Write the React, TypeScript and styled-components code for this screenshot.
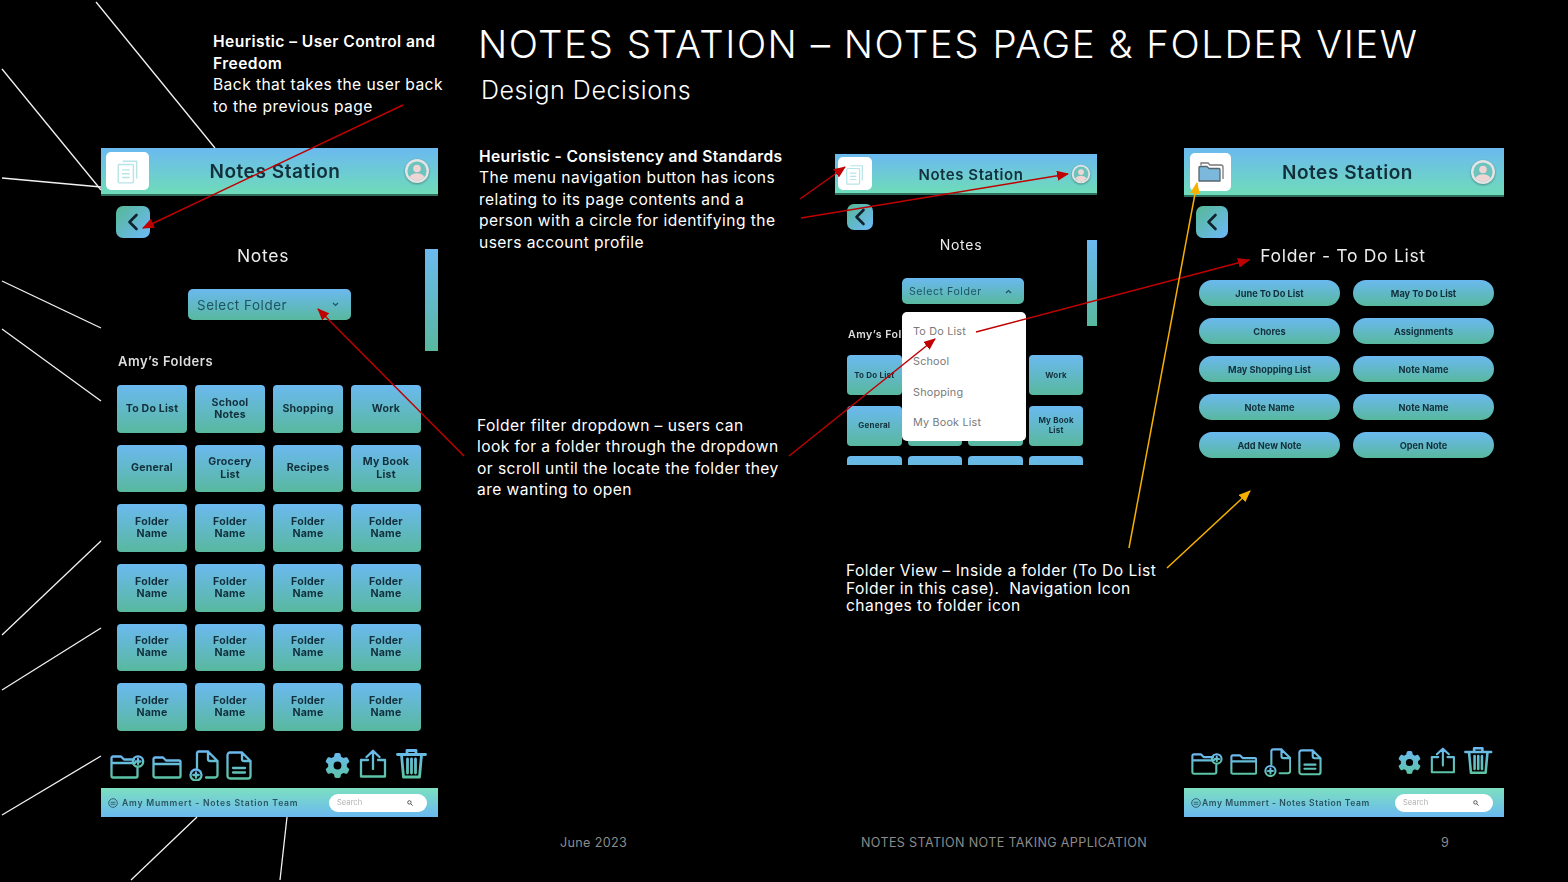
import React from "react";
import styled, { createGlobalStyle, ThemeProvider } from "styled-components";
import { FaGear } from "react-icons/fa6";

interface PhoneDims {
  width: number;
  height: number;
  headerH: number;
  titleSize: number;
  titleNudge: number;
  tileLeft: number;
  tileW: number;
  tileH: number;
  avatar: number;
  avatarRight: number;
  backTop: number;
  backLeft: number;
  backW: number;
  backH: number;
  headingTop: number;
  headingSize: number;
  headingPad: number;
  creditSpacing: number;
  creditGap: number;
}

declare module "styled-components" {
  export interface DefaultTheme extends PhoneDims {}
}

const bigPhone: PhoneDims = {
  width: 337, height: 669, headerH: 48, titleSize: 19, titleNudge: 3, tileLeft: 5, tileW: 43, tileH: 38,
  avatar: 26, avatarRight: 8, backTop: 10, backLeft: 15, backW: 34, backH: 32,
  headingTop: 8, headingSize: 17.5, headingPad: 13, creditSpacing: 0.8, creditGap: 4,
};
const folderPhone: PhoneDims = {
  ...bigPhone, width: 320, headerH: 49, titleNudge: 6, tileLeft: 6, tileW: 41, backTop: 9, backLeft: 12, backW: 32,
  headingPad: 2, creditSpacing: 0.53, creditGap: 1,
};
const menuPhone: PhoneDims = {
  width: 262, height: 311, headerH: 41, titleSize: 15, titleNudge: 1, tileLeft: 3, tileW: 34, tileH: 33,
  avatar: 20, avatarRight: 6, backTop: 9, backLeft: 12, backW: 26, backH: 26,
  headingTop: 7, headingSize: 14, headingPad: 10, creditSpacing: 0.5, creditGap: 2,
};

const blue = "#6bb9f0";
const green = "#58b89e";
const ink = "#12303c";
const phoneFont = `Inter, "Noto Sans", sans-serif`;
const slideFont = `Inter, "Noto Sans", sans-serif`;

const Global = createGlobalStyle`
  html, body { margin: 0; background: #000; }
  body { width: 1568px; height: 882px; overflow: hidden; }
`;

const Slide = styled.div`
  position: relative;
  width: 1568px;
  height: 882px;
  background: #000;
  color: #fff;
  font-family: ${slideFont};
  display: flex;
  flex-direction: column;
`;

const Main = styled.div`
  display: flex;
  padding-left: 101px;
`;

const LeftColumn = styled.div`
  width: 337px;
  margin-right: 39px;
  display: flex;
  flex-direction: column;
`;

const TopNote = styled.p`
  margin: 0;
  height: 148px;
  box-sizing: border-box;
  padding: 31px 0 0 112px;
  font-size: 15.6px;
  line-height: 21.5px;
  white-space: nowrap;
  letter-spacing: 0.42px;
`;

const Strong = styled.b`
  font-weight: 600;
`;

const BodyStrong = styled(Strong)`
  letter-spacing: 0.36px;
`;

const RightArea = styled.div`
  flex: 1;
  display: flex;
  flex-direction: column;
`;

const Heading = styled.h1`
  margin: 19px 0 0 1px;
  font-size: 38.5px;
  line-height: 50px;
  font-weight: 300;
  letter-spacing: 1.5px;
  white-space: nowrap;
`;

const SubHeading = styled.h2`
  margin: 2px 0 0 4px;
  font-size: 25px;
  line-height: 38px;
  font-weight: 300;
  letter-spacing: 0.55px;
`;

const Row = styled.div`
  display: flex;
  margin-top: 36px;
`;

const TextColumn = styled.div`
  width: 358px;
  display: flex;
  flex-direction: column;
`;

const Body = styled.p<{ $left?: number; $top?: number }>`
  margin: ${(p) => p.$top ?? 1}px 0 0 ${(p) => p.$left ?? 2}px;
  font-size: 15.6px;
  line-height: 21.4px;
  white-space: nowrap;
  letter-spacing: 0.44px;
`;

const MiddleColumn = styled.div`
  width: 349px;
  padding-top: 9px;
  display: flex;
  flex-direction: column;
`;

const Caption = styled.p`
  margin: 97px 0 0 11px;
  font-size: 15.6px;
  line-height: 17.5px;
  white-space: nowrap;
  letter-spacing: 0.46px;
`;

const RightColumn = styled.div`
  padding-top: 3px;
`;

const Footer = styled.div`
  margin-top: 18px;
  display: flex;
  font-size: 12.6px;
  color: #8b8b8b;
  line-height: 16px;
`;

const FooterItem = styled.span<{ $width: number; $left?: number }>`
  width: ${(p) => p.$width}px;
  margin-left: ${(p) => p.$left ?? 0}px;
  white-space: nowrap;
  letter-spacing: 0.34px;
`;

/* phone mockup */
const Phone = styled.div`
  position: relative;
  width: ${(p) => p.theme.width}px;
  height: ${(p) => p.theme.height}px;
  overflow: hidden;
  display: flex;
  flex-direction: column;
  font-family: ${phoneFont};
  filter: blur(0.35px);
`;

const PhoneHeader = styled.div`
  flex: none;
  height: ${(p) => p.theme.headerH}px;
  padding: 0 ${(p) => p.theme.avatarRight}px 0 ${(p) => p.theme.tileLeft}px;
  box-sizing: border-box;
  display: flex;
  align-items: center;
  background: linear-gradient(180deg, ${blue} 0%, #6fdcb9 100%);
  border-bottom: 2px solid #2f6d5c;
`;

const IconTile = styled.div`
  width: ${(p) => p.theme.tileW}px;
  height: ${(p) => p.theme.tileH}px;
  background: #fff;
  border-radius: 5px;
  display: flex;
  align-items: center;
  justify-content: center;
  flex: none;
`;

const AppTitle = styled.div`
  flex: 1;
  padding: 1px ${(p) => p.theme.titleNudge}px 0 0;
  text-align: center;
  font-size: ${(p) => p.theme.titleSize}px;
  font-weight: 600;
  color: ${ink};
  letter-spacing: 0.55px;
`;

const Avatar = styled.svg`
  width: ${(p) => p.theme.avatar}px;
  height: ${(p) => p.theme.avatar}px;
  flex: none;
  filter: drop-shadow(0 1px 1px rgba(0, 0, 0, 0.35));
`;

const BackButton = styled.div`
  flex: none;
  width: ${(p) => p.theme.backW}px;
  height: ${(p) => p.theme.backH}px;
  margin: ${(p) => p.theme.backTop}px 0 0 ${(p) => p.theme.backLeft}px;
  border-radius: 7px;
  background: linear-gradient(135deg, ${green} 10%, ${blue} 90%);
  display: flex;
  align-items: center;
  justify-content: center;
`;

const ScreenTitle = styled.div`
  flex: none;
  margin-top: ${(p) => p.theme.headingTop}px;
  padding-right: ${(p) => p.theme.headingPad}px;
  text-align: center;
  font-size: ${(p) => p.theme.headingSize}px;
  line-height: 1.15;
  font-weight: 400;
  color: #ececec;
  letter-spacing: 0.7px;
`;

const Select = styled.div<{ $top: number; $left: number; $width: number; $height: number; $size: number }>`
  flex: none;
  box-sizing: border-box;
  margin: ${(p) => p.$top}px 0 0 ${(p) => p.$left}px;
  width: ${(p) => p.$width}px;
  height: ${(p) => p.$height}px;
  padding: 0 12px 0 ${(p) => (p.$size > 12 ? 9 : 7)}px;
  display: flex;
  align-items: center;
  justify-content: space-between;
  border-radius: 5px;
  background: linear-gradient(180deg, ${blue} 0%, ${green} 100%);
  color: #1c5561;
  font-size: ${(p) => p.$size}px;
  letter-spacing: 0.55px;
`;

const FolderLabel = styled.div<{ $top: number; $left: number; $size: number; $clip?: number }>`
  flex: none;
  margin: ${(p) => p.$top}px 0 0 ${(p) => p.$left}px;
  max-width: ${(p) => (p.$clip ? `${p.$clip}px` : "none")};
  overflow: hidden;
  font-size: ${(p) => p.$size}px;
  line-height: 18px;
  font-weight: 600;
  color: #dedede;
  white-space: nowrap;
  letter-spacing: 0.5px;
`;

const Scrollbar = styled.div<{ $top: number; $left: number; $width: number; $height: number }>`
  position: absolute;
  top: ${(p) => p.$top}px;
  left: ${(p) => p.$left}px;
  width: ${(p) => p.$width}px;
  height: ${(p) => p.$height}px;
  background: linear-gradient(180deg, ${blue} 0%, ${green} 100%);
`;

const FolderGrid = styled.div<{ $top: number; $left: number; $col: number; $row: number; $colGap: number; $rowGap: number }>`
  flex: none;
  margin: ${(p) => p.$top}px 0 0 ${(p) => p.$left}px;
  display: grid;
  grid-template-columns: repeat(4, ${(p) => p.$col}px);
  grid-auto-rows: ${(p) => p.$row}px;
  column-gap: ${(p) => p.$colGap}px;
  row-gap: ${(p) => p.$rowGap}px;
`;

const FolderTile = styled.div<{ $size: number }>`
  display: flex;
  align-items: center;
  justify-content: center;
  text-align: center;
  white-space: pre;
  border-radius: 4px;
  background: linear-gradient(180deg, ${blue} 0%, ${green} 100%);
  color: ${ink};
  font-size: ${(p) => p.$size}px;
  line-height: 1.14;
  font-weight: 700;
  letter-spacing: 0.2px;
`;

const Menu = styled.ul`
  position: absolute;
  left: 67px;
  top: 158px;
  width: 124px;
  height: 129px;
  margin: 0;
  padding: 5px 0 0 11px;
  box-sizing: border-box;
  list-style: none;
  background: #fff;
  border-radius: 5px;
  z-index: 2;
`;

const MenuItem = styled.li`
  height: 30.3px;
  line-height: 30px;
  font-size: 10.8px;
  color: #7a7a7a;
  letter-spacing: 0.2px;
`;

const NoteGrid = styled.div`
  flex: none;
  margin: 14px 0 0 15px;
  display: grid;
  grid-template-columns: repeat(2, 141px);
  grid-auto-rows: 26px;
  column-gap: 13px;
  row-gap: 12px;
`;

const NotePill = styled.div`
  display: flex;
  align-items: center;
  justify-content: center;
  border-radius: 13px;
  background: linear-gradient(180deg, ${blue} 0%, ${green} 100%);
  color: ${ink};
  font-size: 9.2px;
  font-weight: 700;
`;

const Toolbar = styled.div<{ $bottom: number; $left: number; $right: number }>`
  flex: none;
  margin-top: auto;
  padding: 0 ${(p) => p.$right}px ${(p) => p.$bottom}px ${(p) => p.$left}px;
  display: flex;
  align-items: flex-end;
  justify-content: space-between;
`;

const ToolGroup = styled.div<{ $gap: number }>`
  display: flex;
  align-items: flex-end;
  gap: ${(p) => p.$gap}px;
`;

const ToolIcon = styled.svg`
  fill: none;
  stroke: url(#iconGrad);
  stroke-width: 2.3;
  stroke-linecap: round;
  stroke-linejoin: round;
`;

const GearIcon = styled(FaGear)<{ $size: number }>`
  width: ${(p) => p.$size}px;
  height: ${(p) => p.$size}px;
  margin-bottom: 3px;
  fill: url(#iconGrad);
`;

const BottomBar = styled.div`
  flex: none;
  height: 29px;
  padding: 0 11px 0 7px;
  box-sizing: border-box;
  display: flex;
  align-items: center;
  justify-content: space-between;
  background: linear-gradient(180deg, #7ce0c0 0%, ${blue} 100%);
`;

const Credit = styled.span`
  display: flex;
  align-items: center;
  gap: ${(p) => p.theme.creditGap}px;
  color: #2a5362;
  font-size: 8.6px;
  font-weight: 600;
  letter-spacing: ${(p) => p.theme.creditSpacing}px;
  white-space: nowrap;
`;

const SearchPill = styled.div`
  width: 98px;
  height: 18px;
  box-sizing: border-box;
  padding: 0 14px 0 8px;
  border-radius: 9px;
  background: #fff;
  display: flex;
  align-items: center;
  justify-content: space-between;
  color: #b0b0b0;
  font-size: 7.6px;
`;

const Overlay = styled.svg`
  position: absolute;
  left: 0;
  top: 0;
  pointer-events: none;
  z-index: 5;
`;

const NotesGlyph = ({ size }: { size: number }) => (
  <svg width={size} height={size} viewBox="0 0 24 24" fill="none" stroke="#b7e4e8" strokeWidth="1.3">
    <path d="M7 3h13v16" />
    <rect x="3" y="6" width="14" height="17" rx="1" />
    <path d="M6.5 11h7M6.5 14.5h7M6.5 18h7" />
  </svg>
);

const FoldersGlyph = () => (
  <svg width="28" height="22" viewBox="0 0 28 22">
    <path d="M4 4.500V2h7l2 2h11a2 2 0 0 1 2 2v12" fill="none" stroke="#777" strokeWidth="1.3" />
    <path d="M2 6.500a1 1 0 0 1 1-1h7l2 2h10a1 1 0 0 1 1 1V20H2z" fill="#7cb7dc" stroke="#56666e" strokeWidth="1.3" strokeLinejoin="round" />
  </svg>
);

const AvatarGlyph = () => (
  <Avatar viewBox="0 0 26 26">
    <circle cx="13" cy="13" r="12" fill="#e4e4e4" />
    <circle cx="13" cy="13" r="9.6" fill="#6dc3bd" />
    <circle cx="13" cy="10.5" r="3.8" fill="#efd5d3" />
    <path d="M5.6 19a8 6 0 0 1 14.8 0a9.6 9.6 0 0 1-14.8 0z" fill="#efd5d3" />
  </Avatar>
);

const Chevron = () => (
  <svg width="14" height="18" viewBox="0 0 14 18" fill="none" stroke="#10222c" strokeWidth="2.6" strokeLinecap="round" strokeLinejoin="round">
    <path d="M10.500 2L3.500 9l7 7" />
  </svg>
);

const Caret = ({ up }: { up?: boolean }) => (
  <svg width="7" height="5" viewBox="0 0 7 5" fill="none" stroke="#1c5561" strokeWidth="1.2">
    <path d={up ? "M1 4l2.5-2.5L6 4" : "M1 1l2.5 2.5L6 1"} />
  </svg>
);

const SearchGlyph = () => (
  <svg width="6" height="6" viewBox="0 0 6 6" fill="none" stroke="#555" strokeWidth="1">
    <circle cx="2.4" cy="2.4" r="1.7" />
    <path d="M3.7 3.7L5.6 5.6" />
  </svg>
);

const TeamGlyph = () => (
  <svg width="10" height="10" viewBox="0 0 10 10" fill="none" stroke="#2a5362" strokeWidth="0.9">
    <circle cx="5" cy="5" r="4.300" />
    <path d="M2.600 4.200h4.800M2.600 6.200h4.800" />
  </svg>
);

// k scales the drawn tools a little between the two phones
const Tools = ({ k, bottom, left, right, groupGap }: { k: number; bottom: number; left: number; right: number; groupGap: number }) => (
  <Toolbar $bottom={bottom} $left={left} $right={right}>
    <ToolGroup $gap={7 * k}>
      <ToolIcon width={35 * k} height={24 * k} viewBox="0 0 35 24" style={{ marginBottom: 2 }}>
        <path d="M1.5 8V3A1.5 1.5 0 0 1 3 1.500H11L14 4.500H24M1.500 8H25M1.500 8V21A1.500 1.500 0 0 0 3 22.500H26A1.500 1.500 0 0 0 27.500 21V13" />
        <circle cx="28" cy="6.500" r="5.200" />
        <path d="M28 4v5M25.500 6.500h5" />
      </ToolIcon>
      <ToolIcon width={30 * k} height={23 * k} viewBox="0 0 30 23" style={{ marginBottom: 2 }}>
        <path d="M1.500 7V3A1.500 1.500 0 0 1 3 1.500H11L14 4.500H27A1.500 1.500 0 0 1 28.500 6V20A1.500 1.500 0 0 1 27 21.500H3A1.500 1.500 0 0 1 1.500 20ZM1.500 8H28.500" />
      </ToolIcon>
      <ToolIcon width={30 * k} height={31 * k} viewBox="0 0 30 31">
        <path d="M8 18V3A2 2 0 0 1 10 1.500H19L28.500 11V25A2.500 2.500 0 0 1 26 27.500H17M19 1.500V9A2 2 0 0 0 21 11H28.500" />
        <circle cx="7" cy="25" r="5.500" />
        <path d="M7 22.300v5.400M4.300 25h5.400" />
      </ToolIcon>
      <ToolIcon width={26 * k} height={29 * k} viewBox="0 0 26 29" style={{ marginBottom: 1 }}>
        <path d="M4 1.500H16L24.500 10V25A2.500 2.500 0 0 1 22 27.500H4A2.500 2.500 0 0 1 1.500 25V4A2.500 2.500 0 0 1 4 1.500ZM16 1.500V8A2 2 0 0 0 18 10H24.500M7 17H19M7 21.500H19" />
      </ToolIcon>
    </ToolGroup>
    <ToolGroup $gap={groupGap}>
      <GearIcon $size={25 * k} />
      <ToolIcon width={28 * k} height={29 * k} viewBox="0 0 28 29" style={{ marginBottom: 3 }}>
        <path d="M9 11H2V27.500H26V11H19M14 20V2M7.500 8L14 1.800L20.500 8" />
      </ToolIcon>
      <ToolIcon width={31 * k} height={31 * k} viewBox="0 0 31 31" style={{ marginBottom: 2, strokeWidth: 2.8 }}>
        <path d="M1.500 6.500H29.500M11 6V2.500H20V6M5.500 7L7.500 29H23.500L25.500 7M11.500 11V25M15.500 11V25M19.500 11V25" />
      </ToolIcon>
    </ToolGroup>
  </Toolbar>
);

const Bar = () => (
  <BottomBar>
    <Credit><TeamGlyph />Amy Mummert - Notes Station Team</Credit>
    <SearchPill>
      Search
      <SearchGlyph />
    </SearchPill>
  </BottomBar>
);

const mainFolders = [
  "To Do List", "School\nNotes", "Shopping", "Work",
  "General", "Grocery\nList", "Recipes", "My Book\nList",
  ...Array(16).fill("Folder\nName"),
];

const menuFolders = ["To Do List", "", "", "Work", "General", "", "", "My Book\nList", "", "", "", ""];

const notes = [
  "June To Do List", "May To Do List", "Chores", "Assignments", "May Shopping List",
  "Note Name", "Note Name", "Note Name", "Add New Note", "Open Note",
];

const white = [
  [96, 2, 215, 148], [2, 69, 101, 190], [2, 178, 101, 187], [2, 281, 101, 328], [2, 329, 101, 401],
  [2, 635, 101, 541], [2, 690, 101, 628], [2, 815, 101, 756], [131, 880, 197, 817], [280, 880, 287, 817],
];
const red = [
  [403, 105, 143, 228], [464, 456, 318, 309], [800, 199, 845, 167], [801, 218, 1068, 174],
  [789, 456, 935, 339], [976, 332, 1249, 260],
];
const orange = [
  [1129, 548, 1197, 183], [1167, 568, 1250, 491],
];

export default function App() {
  return (
    <Slide>
      <Global />
      <Main>
        <LeftColumn>
          <TopNote>
            <Strong>Heuristic – User Control and<br />Freedom</Strong><br />
            Back that takes the user back<br />to the previous page
          </TopNote>
          <ThemeProvider theme={bigPhone}>
            <Phone>
              <PhoneHeader>
                <IconTile><NotesGlyph size={26} /></IconTile>
                <AppTitle>Notes Station</AppTitle>
                <AvatarGlyph />
              </PhoneHeader>
              <BackButton><Chevron /></BackButton>
              <ScreenTitle>Notes</ScreenTitle>
              <Scrollbar $top={101} $left={324} $width={13} $height={102} />
              <Select $top={23} $left={87} $width={163} $height={31} $size={13.4}>
                Select Folder <Caret />
              </Select>
              <FolderLabel $top={32} $left={17} $size={13}>Amy’s Folders</FolderLabel>
              <FolderGrid $top={15} $left={16} $col={70} $row={47.6} $colGap={8} $rowGap={12}>
                {mainFolders.map((name, i) => (
                  <FolderTile key={i} $size={10.6}>{name}</FolderTile>
                ))}
              </FolderGrid>
              <Tools k={1} bottom={7} left={9} right={11} groupGap={9} />
              <Bar />
            </Phone>
          </ThemeProvider>
        </LeftColumn>
        <RightArea>
          <Heading>NOTES STATION – NOTES PAGE &amp; FOLDER VIEW</Heading>
          <SubHeading>Design Decisions</SubHeading>
          <Row>
            <TextColumn>
              <Body>
                <BodyStrong>Heuristic - Consistency and Standards</BodyStrong><br />
                The menu navigation button has icons<br />
                relating to its page contents and a<br />
                person with a circle for identifying the<br />
                users account profile
              </Body>
              <Body $left={0} $top={162}>
                Folder filter dropdown – users can<br />
                look for a folder through the dropdown<br />
                or scroll until the locate the folder they<br />
                are wanting to open
              </Body>
            </TextColumn>
            <MiddleColumn>
              <ThemeProvider theme={menuPhone}>
                <Phone>
                  <PhoneHeader>
                    <IconTile><NotesGlyph size={22} /></IconTile>
                    <AppTitle>Notes Station</AppTitle>
                    <AvatarGlyph />
                  </PhoneHeader>
                  <BackButton><Chevron /></BackButton>
                  <ScreenTitle>Notes</ScreenTitle>
                  <Scrollbar $top={86} $left={252} $width={10} $height={86} />
                  <Select $top={25} $left={67} $width={122} $height={26} $size={10.6}>
                    Select Folder <Caret up />
                  </Select>
                  {/* the open menu hides the rest of this label */}
                  <FolderLabel $top={22} $left={13} $size={10.6} $clip={54}>Amy’s Folders</FolderLabel>
                  <FolderGrid $top={11} $left={12} $col={54.6} $row={40} $colGap={6} $rowGap={10.5}>
                    {menuFolders.map((name, i) => (
                      <FolderTile key={i} $size={8}>{name}</FolderTile>
                    ))}
                  </FolderGrid>
                  <Menu>
                    <MenuItem>To Do List</MenuItem>
                    <MenuItem>School</MenuItem>
                    <MenuItem>Shopping</MenuItem>
                    <MenuItem>My Book List</MenuItem>
                  </Menu>
                </Phone>
              </ThemeProvider>
              <Caption>
                Folder View – Inside a folder (To Do List<br />
                Folder in this case).&nbsp; Navigation Icon<br />
                changes to folder icon
              </Caption>
            </MiddleColumn>
            <RightColumn>
              <ThemeProvider theme={folderPhone}>
                <Phone>
                  <PhoneHeader>
                    <IconTile><FoldersGlyph /></IconTile>
                    <AppTitle>Notes Station</AppTitle>
                    <AvatarGlyph />
                  </PhoneHeader>
                  <BackButton><Chevron /></BackButton>
                  <ScreenTitle>Folder - To Do List</ScreenTitle>
                  <NoteGrid>
                    {notes.map((name, i) => (
                      <NotePill key={i}>{name}</NotePill>
                    ))}
                  </NoteGrid>
                  <Tools k={0.92} bottom={11} left={7} right={11} groupGap={9} />
                  <Bar />
                </Phone>
              </ThemeProvider>
            </RightColumn>
          </Row>
        </RightArea>
      </Main>
      <Footer>
        <FooterItem $left={560} $width={301}>June 2023</FooterItem>
        <FooterItem $width={580}>NOTES STATION NOTE TAKING APPLICATION</FooterItem>
        <FooterItem $width={20}>9</FooterItem>
      </Footer>
      <Overlay width="1568" height="882" viewBox="0 0 1568 882">
        <defs>
          <linearGradient id="iconGrad" x1="0" y1="0" x2="0" y2="1">
            <stop offset="0" stopColor="#6bb9f0" />
            <stop offset="1" stopColor="#5cc4a6" />
          </linearGradient>
          <marker id="redHead" markerUnits="userSpaceOnUse" markerWidth="12" markerHeight="10" refX="11" refY="5" orient="auto">
            <path d="M0 0L12 5L0 10z" fill="#c00000" />
          </marker>
          <marker id="orangeHead" markerUnits="userSpaceOnUse" markerWidth="12" markerHeight="10" refX="11" refY="5" orient="auto">
            <path d="M0 0L12 5L0 10z" fill="#f5b000" />
          </marker>
        </defs>
        {white.map(([x1, y1, x2, y2], i) => (
          <line key={i} x1={x1} y1={y1} x2={x2} y2={y2} stroke="#f2f2f2" strokeWidth="1.3" />
        ))}
        {red.map(([x1, y1, x2, y2], i) => (
          <line key={i} x1={x1} y1={y1} x2={x2} y2={y2} stroke="#c00000" strokeWidth="1.5" markerEnd="url(#redHead)" />
        ))}
        {orange.map(([x1, y1, x2, y2], i) => (
          <line key={i} x1={x1} y1={y1} x2={x2} y2={y2} stroke="#f5b000" strokeWidth="1.5" markerEnd="url(#orangeHead)" />
        ))}
      </Overlay>
    </Slide>
  );
}
